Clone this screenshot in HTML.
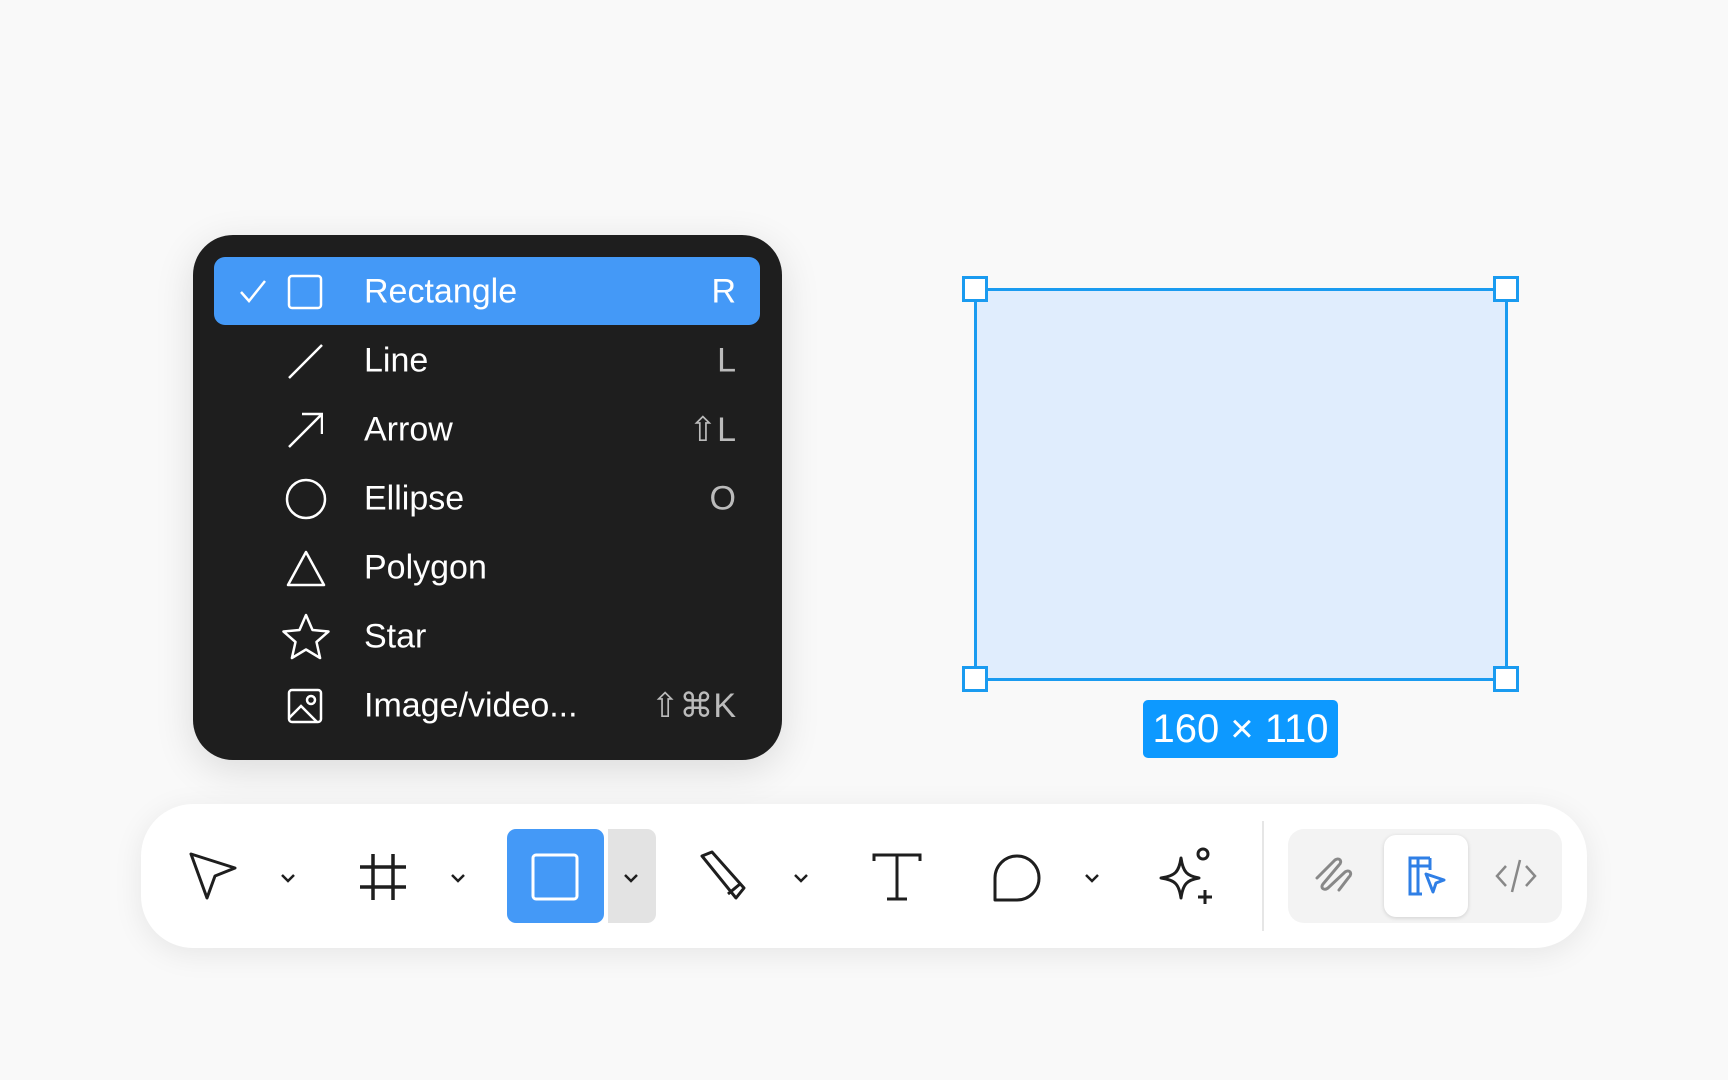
<!DOCTYPE html>
<html><head><meta charset="utf-8"><style>
body{margin:0;width:1728px;height:1080px;background:#f9f9f9;position:relative;overflow:hidden;font-family:"Liberation Sans",sans-serif}
.menu{position:absolute;left:193px;top:235px;width:589px;height:525px;background:#1e1e1e;border-radius:40px;box-shadow:0 10px 40px rgba(0,0,0,.12)}
.hl{position:absolute;left:214px;top:257px;width:546px;height:68px;background:#4499f7;border-radius:11px}
.row{position:absolute;left:0;width:1728px;height:69px}
.row .t{position:absolute;left:364px;top:50%;transform:translateY(-50%);color:#fff;font-size:34px}
.row .k{position:absolute;right:992px;top:50%;transform:translateY(-50%);color:#bbb;font-size:34px}
.row svg{position:absolute;left:287px;top:50%;transform:translateY(-50%)}
.sel{position:absolute;left:974px;top:288px;width:528px;height:387px;background:#e0edfd;border:3px solid #1a9bf0}
.h{position:absolute;width:20px;height:20px;background:#fff;border:3px solid #1a9bf0}
.lab{position:absolute;left:1143px;top:700px;width:195px;height:58px;background:#0d99ff;border-radius:5px;color:#fff;font-size:40px;text-align:center;line-height:58px}
.tb{position:absolute;left:141px;top:804px;width:1446px;height:144px;background:#fff;border-radius:52px;box-shadow:0 6px 30px rgba(0,0,0,.08)}
.ic{position:absolute;transform:translate(-50%,-50%)}
</style></head><body>
<div class="menu"></div>
<div class="hl"></div>
<div class="row" style="top:257px">
<svg style="left:238px" width="30" height="30" viewBox="0 0 30 30"><path d="M3 15l8 9L27 4" fill="none" stroke="#fff" stroke-width="2.5"/></svg>
<svg width="36" height="36" viewBox="0 0 36 36"><rect x="2" y="2" width="32" height="32" rx="3" fill="none" stroke="#fff" stroke-width="2.5"/></svg>
<span class="t">Rectangle</span><span class="k" style="color:#fff">R</span></div>
<div class="row" style="top:326px"><svg width="36" height="36" viewBox="0 0 36 36"><path d="M2 35L35 2" stroke="#fff" stroke-width="2.5"/></svg><span class="t">Line</span><span class="k">L</span></div>
<div class="row" style="top:395px"><svg width="36" height="36" viewBox="0 0 36 36"><path d="M2 35L35 2M15 2h20v20" fill="none" stroke="#fff" stroke-width="2.5"/></svg><span class="t">Arrow</span><span class="k">⇧L</span></div>
<div class="row" style="top:464px"><svg style="left:285px" width="42" height="42" viewBox="0 0 42 42"><circle cx="21" cy="21" r="19" fill="none" stroke="#fff" stroke-width="2.5"/></svg><span class="t">Ellipse</span><span class="k">O</span></div>
<div class="row" style="top:533px"><svg style="left:286px" width="40" height="38" viewBox="0 0 40 38"><path d="M20 3L38 36H2z" fill="none" stroke="#fff" stroke-width="2.5" stroke-linejoin="round"/></svg><span class="t">Polygon</span></div>
<div class="row" style="top:602px"><svg style="left:281px" width="50" height="48" viewBox="0 0 50 48"><path d="M25 2l6.5 15 16 1.5-12 10.5 3.6 16L25 36.5 10.9 45l3.6-16L2.5 18.5l16-1.5z" fill="none" stroke="#fff" stroke-width="2.5" stroke-linejoin="round"/></svg><span class="t">Star</span></div>
<div class="row" style="top:671px"><svg width="36" height="36" viewBox="0 0 36 36"><rect x="2" y="2" width="32" height="32" rx="3" fill="none" stroke="#fff" stroke-width="2.5"/><circle cx="24" cy="12" r="4" fill="none" stroke="#fff" stroke-width="2.5"/><path d="M2 30l12-12 16 16" fill="none" stroke="#fff" stroke-width="2.5"/></svg><span class="t">Image/video...</span><span class="k">⇧⌘K</span></div>

<div class="sel"></div>
<div class="h" style="left:962px;top:276px"></div><div class="h" style="left:1493px;top:276px"></div>
<div class="h" style="left:962px;top:666px"></div><div class="h" style="left:1493px;top:666px"></div>
<div class="lab">160 × 110</div>

<div class="tb"></div>
<div style="position:absolute;left:507px;top:829px;width:97px;height:94px;background:#4499f7;border-radius:9px"></div>
<div style="position:absolute;left:608px;top:829px;width:48px;height:94px;background:#e3e3e3;border-radius:0 9px 9px 0"></div>
<div style="position:absolute;left:1262px;top:821px;width:2px;height:110px;background:#e6e6e6"></div>
<div style="position:absolute;left:1288px;top:829px;width:274px;height:94px;background:#f3f3f3;border-radius:16px"></div>
<div style="position:absolute;left:1384px;top:835px;width:84px;height:82px;background:#fff;border-radius:12px;box-shadow:0 1px 4px rgba(0,0,0,.15)"></div>

<svg class="ic" style="left:213px;top:876px" width="56" height="56" viewBox="0 0 56 56"><path d="M6 6l44 14-20 8-8 22z" fill="none" stroke="#1e1e1e" stroke-width="3" stroke-linejoin="round"/></svg>
<svg class="ic" style="left:383px;top:877px" width="54" height="54" viewBox="0 0 54 54"><path d="M17 4v46M37 4v46M4 17h46M4 37h46" stroke="#1e1e1e" stroke-width="3.5"/></svg>
<svg class="ic" style="left:555px;top:877px" width="50" height="50" viewBox="0 0 50 50"><rect x="3" y="3" width="44" height="44" rx="3" fill="none" stroke="#fff" stroke-width="3"/></svg>
<svg class="ic" style="left:724px;top:876px" width="56" height="56" viewBox="0 0 56 56"><path d="M6 8l10-4 32 36-8 10z M32 46l12-10" fill="none" stroke="#1e1e1e" stroke-width="3" stroke-linejoin="round"/></svg>
<svg class="ic" style="left:897px;top:877px" width="52" height="52" viewBox="0 0 52 52"><path d="M3 10V4h46v6M26 4v44M16 48h20" fill="none" stroke="#1e1e1e" stroke-width="3"/></svg>
<svg class="ic" style="left:1016px;top:877px" width="54" height="54" viewBox="0 0 54 54"><path d="M6 50V28A22 22 0 1 1 28 50z" fill="none" stroke="#1e1e1e" stroke-width="3" stroke-linejoin="round"/></svg>
<svg class="ic" style="left:1187px;top:876px" width="60" height="60" viewBox="0 0 60 60"><path d="M24 12c2 14 6 18 18 20-12 2-16 6-18 20-2-14-6-18-20-20 14-2 18-6 20-20z" fill="none" stroke="#1e1e1e" stroke-width="3" stroke-linejoin="round"/><circle cx="46" cy="8" r="5" fill="none" stroke="#1e1e1e" stroke-width="3"/><path d="M48 44v14M41 51h14" stroke="#1e1e1e" stroke-width="3"/></svg>
<svg class="ic" style="left:288px;top:878px" width="18" height="12" viewBox="0 0 18 12"><path d="M3 3l6 6 6-6" fill="none" stroke="#1e1e1e" stroke-width="2.5"/></svg>
<svg class="ic" style="left:458px;top:878px" width="18" height="12" viewBox="0 0 18 12"><path d="M3 3l6 6 6-6" fill="none" stroke="#1e1e1e" stroke-width="2.5"/></svg>
<svg class="ic" style="left:631px;top:878px" width="18" height="12" viewBox="0 0 18 12"><path d="M3 3l6 6 6-6" fill="none" stroke="#1e1e1e" stroke-width="2.5"/></svg>
<svg class="ic" style="left:801px;top:878px" width="18" height="12" viewBox="0 0 18 12"><path d="M3 3l6 6 6-6" fill="none" stroke="#1e1e1e" stroke-width="2.5"/></svg>
<svg class="ic" style="left:1092px;top:878px" width="18" height="12" viewBox="0 0 18 12"><path d="M3 3l6 6 6-6" fill="none" stroke="#1e1e1e" stroke-width="2.5"/></svg>
<svg class="ic" style="left:1335px;top:876px" width="44" height="44" viewBox="0 0 44 44"><path d="M4 24L22 6c4-3 8 1 4 5L10 30c-3 4 1 7 5 4L32 18c4-3 8 1 4 5L26 36" fill="none" stroke="#888" stroke-width="3" stroke-linecap="round"/></svg>
<svg class="ic" style="left:1426px;top:876px" width="44" height="44" viewBox="0 0 44 44"><path d="M26 4H6v36h12M6 12h20M14 4v36M26 4v12" fill="none" stroke="#2f7fe6" stroke-width="3"/><path d="M22 20l18 6-8 3-3 9z" fill="none" stroke="#2f7fe6" stroke-width="3" stroke-linejoin="round"/></svg>
<svg class="ic" style="left:1516px;top:876px" width="44" height="44" viewBox="0 0 44 44"><path d="M12 12L3 22l9 10M32 12l9 10-9 10M26 6l-8 32" fill="none" stroke="#888" stroke-width="2.5"/></svg>
</body></html>
